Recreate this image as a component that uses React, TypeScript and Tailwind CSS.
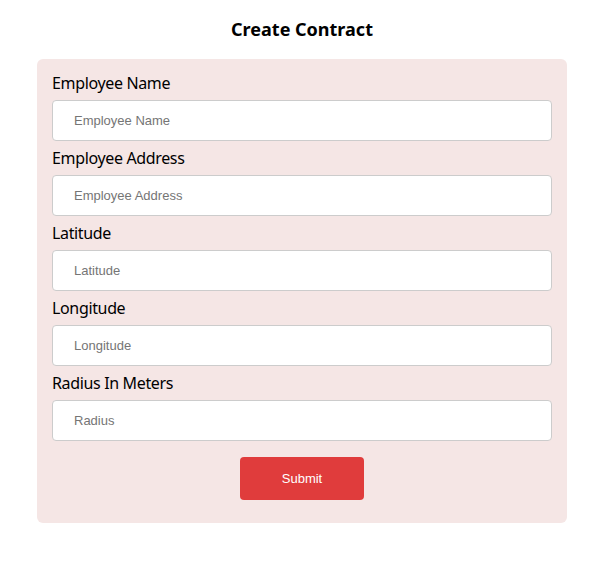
import React from "react";

const fields = [
  { label: "Employee Name", placeholder: "Employee Name" },
  { label: "Employee Address", placeholder: "Employee Address" },
  { label: "Latitude", placeholder: "Latitude" },
  { label: "Longitude", placeholder: "Longitude" },
  { label: "Radius In Meters", placeholder: "Radius" },
];

export default function App() {
  return (
    <div className="w-[608px] h-[578px] bg-white" style={{ fontFamily: '"Noto Sans", sans-serif' }}>
      <div className="pt-[17px] flex flex-col">
        <h1 className="h-[24px] leading-[24px] text-[18px] font-bold text-black text-center pr-[4px]">Create Contract</h1>
        <form className="mt-[18px] ml-[37px] w-[530px] bg-[#f5e6e5] rounded-[6px] px-[15px] pt-[16px] pb-[23px] flex flex-col">
          {fields.map((f) => (
            <div key={f.label} className="flex flex-col mb-[9px]">
              <label className="h-[25px] leading-[16px] text-[16px] tracking-[-0.35px] text-black">{f.label}</label>
              <input
                placeholder={f.placeholder}
                className="h-[41px] w-[500px] bg-white border border-[#cccccc] rounded-[4px] pl-[21px] text-[13px] text-black placeholder:text-[#757575] outline-none"
                style={{ fontFamily: '"Liberation Sans", Arial, sans-serif' }}
              />
            </div>
          ))}
          <div className="flex justify-center mt-[7px]">
            <button
              type="button"
              className="w-[124px] h-[43px] bg-[#e03c3c] text-white text-[13px] rounded-[4px]"
              style={{ fontFamily: '"Liberation Sans", Arial, sans-serif' }}
            >
              Submit
            </button>
          </div>
        </form>
      </div>
    </div>
  );
}
